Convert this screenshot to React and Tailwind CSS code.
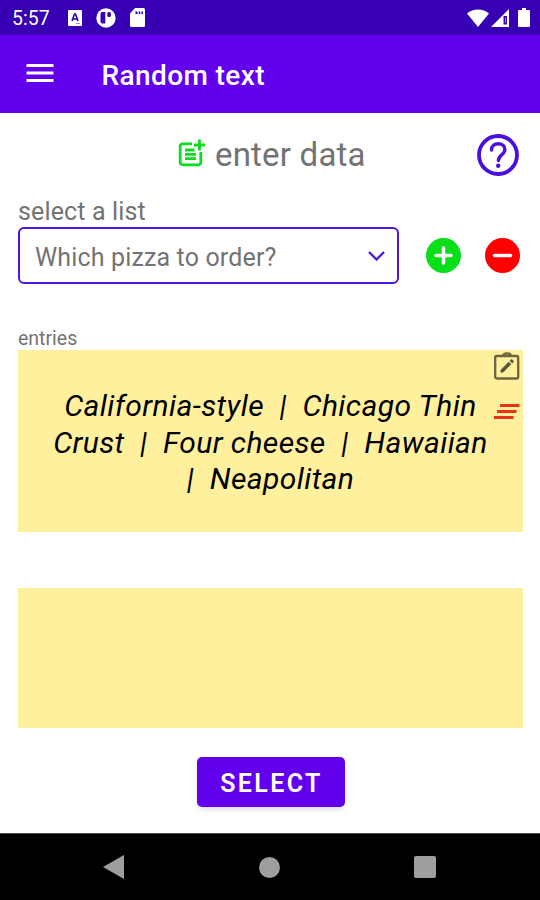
import { MdMenu } from "react-icons/md";

const StatusBar = () => (
  <div className="h-[35px] bg-[#3700b3] flex items-center text-white pl-3 pr-[10px]">
    <span className="text-[19.5px] leading-none w-[56px] mt-[2px]">5:57</span>
    <svg className="w-[14px] h-[16px]" viewBox="0 0 14 16">
      <rect width="14" height="16" rx="1" fill="#fff" />
      <path d="M4 11 6.5 4h1L10 11M5 9h4" fill="none" stroke="#3700b3" strokeWidth="1.6" />
      <path d="M8 13.5h4" stroke="#a98be0" strokeWidth="1" />
    </svg>
    <svg className="w-5 h-5 ml-[14px]" viewBox="0 0 20 20">
      <circle cx="10" cy="10" r="9.7" fill="#fff" />
      <path d="M6.5 4h2.8v11.5H6.5a2 2 0 0 1-2-2V6a2 2 0 0 1 2-2z" fill="#3700b3" />
      <rect x="11.3" y="4" width="3.6" height="5" rx="1.5" fill="#3700b3" />
    </svg>
    <svg className="w-[15px] h-[19px] ml-[14px] mb-px" viewBox="0 0 15 19">
      <path d="M5 0h8.5A1.5 1.5 0 0 1 15 1.5v16a1.5 1.5 0 0 1-1.5 1.5h-12A1.5 1.5 0 0 1 0 17.5V5.500z" fill="#fff" />
      <path d="M5.5 3.500h2v2.500h-2zM8.700 3.500h1.600V6H8.700zM11.400 3.500h1.600V6h-1.600z" fill="#3700b3" />
    </svg>
    <div className="ml-auto flex items-center">
      <svg className="w-[22px] h-[18px]" viewBox="0 0 22 18">
        <path d="M0 4.5C6-.9 16-.9 22 4.5L11 18z" fill="#fff" />
      </svg>
      <svg className="w-[18px] h-[18px] ml-[2px]" viewBox="0 0 18 18">
        <path d="M18 0v18H0z" fill="#fff" />
        <path d="M12.5 7H16v8.500h-3.500z" fill="#3700b3" />
        <path d="M14 8.500h1V14h-1z" fill="#fff" opacity=".5" />
      </svg>
      <svg className="w-3 h-[19px] ml-[9px]" viewBox="0 0 12 19">
        <path d="M4 0h4v2h3a1 1 0 0 1 1 1v15a1 1 0 0 1-1 1H1a1 1 0 0 1-1-1V3a1 1 0 0 1 1-1h3z" fill="#fff" />
      </svg>
    </div>
  </div>
);

const AppBar = () => (
  <div className="h-[78px] bg-[#6200ee] flex items-center text-white">
    <MdMenu className="w-9 h-9 ml-[22px] mb-[3px]" />
    <h1 className="ml-[43.5px] text-[28px] leading-none font-medium tracking-[0.4px] mt-[4px]">Random text</h1>
  </div>
);

const PostAddIcon = () => (
  <svg className="w-7 h-7 mb-[5px]" viewBox="0 0 28 28" fill="none" stroke="#0bdc1c" strokeWidth="2.8">
    <path d="M14 4.800H4.500A2.300 2.300 0 0 0 2.200 7v16.500a2.300 2.300 0 0 0 2.300 2.300h16a2.300 2.300 0 0 0 2.300-2.300V13" />
    <path d="M21.500 .5v11M16 6h11M7 11h9.500M7 15.300h11M7 19.600h11" />
  </svg>
);

const HelpIcon = () => (
  <svg className="w-[42px] h-[42px]" viewBox="0 0 42 42" fill="none" stroke="#4a0fe0">
    <circle cx="21" cy="21" r="19" strokeWidth="3.8" />
    <path
      d="M14.500 16c0-4 3-6.300 6.700-6.300 3.900 0 6.700 2.300 6.700 5.700 0 5-6.500 5.800-6.500 11.200"
      strokeWidth="3.400"
      strokeLinecap="round"
    />
    <circle cx="21.200" cy="31.700" r="2.200" fill="#4a0fe0" stroke="none" />
  </svg>
);

const ClipboardEditIcon = () => (
  <svg className="w-[26px] h-7" viewBox="0 0 26 28">
    <g fill="none" stroke="#6b6640" strokeWidth="2.3">
      <rect x="1.200" y="4" width="23" height="22.500" rx="1.500" />
      <path d="M9 4c.5-3.500 7.500-3.500 8 0" />
    </g>
    <path d="M6.500 20.500v-2.600l8.200-8.200 2.600 2.600-8.200 8.200zM15.600 8.800l1.300-1.300c.4-.4.9-.4 1.300 0l1.300 1.300c.4.4.4.9 0 1.300l-1.300 1.300z" fill="#5c5738" />
  </svg>
);

const RoundButton = ({ color, path }) => (
  <svg className="w-[35px] h-[35px]" viewBox="0 0 35 35">
    <circle cx="17.500" cy="17.500" r="17.500" fill={color} />
    <path d={path} stroke="#fff" strokeWidth="3.500" strokeLinecap="round" />
  </svg>
);

const NavBar = () => (
  <div className="h-[67px] bg-black border-t border-[#4d4d4d] flex items-center justify-between pl-[103px] pr-[104px] text-[#9e9e9e]">
    <svg className="w-[21px] h-6" viewBox="0 0 21 24">
      <path d="M21 0v24L0 12z" fill="currentColor" />
    </svg>
    <div className="w-[21px] h-[21px] rounded-full bg-[#9e9e9e]" />
    <div className="w-[22px] h-[22px] rounded-[2px] bg-[#9e9e9e]" />
  </div>
);

const App = () => {
  return (
    <div className="w-[540px] h-[900px] bg-white flex flex-col overflow-hidden font-['Roboto',sans-serif] text-[#737373]">
      <StatusBar />
      <AppBar />

      <div className="flex-1 flex flex-col px-[18px]">
        <div className="flex items-center h-[84px] pl-[160px]">
          <PostAddIcon />
          <h2 className="ml-[9px] mb-[2px] text-[33px] leading-none tracking-[0.2px] whitespace-nowrap">enter data</h2>
          <div className="ml-auto mr-[3px]">
            <HelpIcon />
          </div>
        </div>

        <label className="text-[25px] leading-[30px] tracking-[0.15px]">select a list</label>
        <div className="flex items-center">
          <div className="w-[381px] h-[57px] border-2 border-[#4a16e0] rounded-[6px] flex items-center justify-between pl-[15px] pr-[12px]">
            <span className="mt-[3px] text-[25px] leading-none tracking-[0.15px]">Which pizza to order?</span>
            <svg className="w-[17px] h-[10px]" viewBox="0 0 17 10">
              <path d="M1 1l7.500 7.500L16 1" fill="none" stroke="#4a16e0" strokeWidth="2.300" />
            </svg>
          </div>
          <div className="flex gap-6 ml-[27px]">
            <RoundButton color="#08df18" path="M17.500 10v15M10 17.500h15" />
            <RoundButton color="#ff0000" path="M9.500 17.500h16" />
          </div>
        </div>

        <label className="mt-[43px] text-[19.5px] leading-[23px]">entries</label>
        <div className="relative w-[505px] h-[182px] bg-[#fff09e] pt-[38px]">
          <p className="text-[30px] leading-[36.5px] tracking-[0.4px] italic text-black text-center whitespace-pre">
            <span className="block">{"California-style  |  Chicago Thin"}</span>
            <span className="block">{"Crust  |  Four cheese  |  Hawaiian"}</span>
            <span className="block">{"|  Neapolitan"}</span>
          </p>
          <div className="absolute right-[3px] top-[2px] flex flex-col items-center gap-[24px]">
            <ClipboardEditIcon />
            <svg className="w-[26px] h-[15px]" viewBox="0 0 26 15">
              <path d="M6 1.500h19.500M3 7.500h19.500M0 13.500h19.500" stroke="#e8331c" strokeWidth="2.800" />
            </svg>
          </div>
        </div>

        <div className="mt-14 w-[505px] h-[140px] bg-[#fff09e]" />

        <button className="mt-[29px] ml-[179px] pt-[4px] pl-[1px] w-[148px] h-[50px] rounded-[5px] bg-[#6200ee] text-white text-[25px] font-semibold tracking-[2.4px] shadow-md">
          SELECT
        </button>
      </div>

      <NavBar />
    </div>
  );
};

export default App;
